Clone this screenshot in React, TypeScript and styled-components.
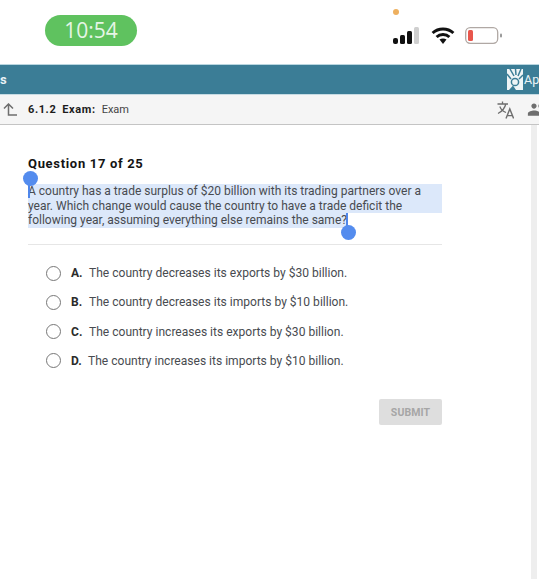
import React from "react";
import styled, { createGlobalStyle } from "styled-components";
import { MdPeople } from "react-icons/md";

const Global = createGlobalStyle`
  html, body { margin: 0; padding: 0; background: #fff; }
  body { font-family: Roboto, "Liberation Sans", sans-serif; }
`;

const Page = styled.div`
  width: 539px;
  height: 579px;
  overflow: hidden;
  display: flex;
  flex-direction: column;
  background: #fff;
`;

const StatusBar = styled.div`
  height: 65px;
  flex: none;
  display: flex;
  justify-content: space-between;
  padding: 15px 36px 0 45px;
  box-sizing: border-box;
`;

const TimePill = styled.div`
  width: 92px;
  height: 31px;
  border-radius: 16px;
  background: #5fc25f;
  color: #e6f5e6;
  font-family: "Open Sans", Roboto, sans-serif;
  font-size: 21px;
  line-height: 31px;
  text-align: center;
`;

const StatusRight = styled.div`
  display: flex;
  flex-direction: column;
  margin-top: -6px;
`;

const OrangeDot = styled.div`
  width: 6px;
  height: 6px;
  border-radius: 50%;
  background: #eeb05f;
`;

const StatusIcons = styled.div`
  margin-top: 12px;
  display: flex;
  align-items: flex-start;
  gap: 10px;
`;

const TealBar = styled.div`
  height: 29px;
  flex: none;
  background: #3b7d96;
  border-top: 1px solid #b9d6e0;
  border-bottom: 1px solid #c6dbe3;
  margin-top: -1px;
  display: flex;
  align-items: center;
  color: #eaf3f6;
  font-size: 13px;
  font-weight: 700;
  white-space: nowrap;
  overflow: hidden;
`;

const TealLeft = styled.span`
  flex: 0 0 507px;
`;

const TealBrand = styled.div`
  flex: none;
  display: flex;
  align-items: center;
  gap: 1px;
  font-size: 12.5px;
  font-weight: 400;
`;

const SubHeader = styled.div`
  height: 30px;
  flex: none;
  box-sizing: border-box;
  background: #f5f5f5;
  border-bottom: 1px solid #c4c4c4;
  display: flex;
  align-items: center;
  padding-left: 3px;
  white-space: nowrap;
  overflow: hidden;
`;

const Crumbs = styled.div`
  margin-left: 11px;
  flex: 0 0 469px;
  font-size: 11px;
  color: #444;
  display: flex;
  gap: 6px;
`;

const CrumbStrong = styled.b`
  font-weight: 700;
  color: #1c1c1c;
  letter-spacing: 0.6px;
`;

const SubIcons = styled.div`
  display: flex;
  align-items: center;
  flex: none;
  gap: 13px;
  color: #6e6e6e;
`;

const Main = styled.div`
  flex: 1;
  display: flex;
  min-height: 0;
`;

const Content = styled.div`
  width: 414px;
  margin-left: 28px;
  padding-top: 31px;
  display: flex;
  flex-direction: column;
`;

const Scrollbar = styled.div`
  width: 6px;
  margin-left: 89px;
  flex: none;
  background: #eeeeee;
`;

const Title = styled.div`
  font-size: 13px;
  font-weight: 700;
  line-height: 16px;
  color: #141414;
  letter-spacing: 0.68px;
`;

const Passage = styled.div`
  position: relative;
  margin-top: 12px;
  font-size: 12.03px;
  line-height: 14.5px;
  color: #484b50;
  padding-bottom: 16.5px;
  border-bottom: 1px solid #e6e6e6;
`;

const Line = styled.div<{ $w: number }>`
  width: ${(p) => p.$w}px;
  height: 14.5px;
  background: #dce8fa;
  white-space: nowrap;
`;

const Caret = styled.span<{ $l: number; $t: number; $h: number }>`
  position: absolute;
  left: ${(p) => p.$l}px;
  top: ${(p) => p.$t}px;
  width: 2px;
  height: ${(p) => p.$h}px;
  background: #4f86ea;
`;

const Knob = styled.span<{ $l: number; $t: number }>`
  position: absolute;
  left: ${(p) => p.$l}px;
  top: ${(p) => p.$t}px;
  width: 15px;
  height: 15px;
  border-radius: 50%;
  background: #548cee;
`;

const Options = styled.div`
  margin-top: 13.4px;
  padding-left: 18px;
  display: flex;
  flex-direction: column;
`;

const Option = styled.div`
  height: 29.3px;
  display: flex;
  align-items: center;
  font-size: 12.05px;
  color: #484b50;
  white-space: nowrap;
`;

const Radio = styled.span`
  width: 15px;
  height: 15px;
  box-sizing: border-box;
  border: 1.5px solid #777;
  border-radius: 50%;
  margin-right: 10px;
  flex: none;
`;

const Letter = styled.b<{ $w: number }>`
  width: ${(p) => p.$w}px;
  flex: none;
  font-weight: 700;
  color: #2b2b2b;
`;

const SubmitRow = styled.div`
  margin-top: 23.6px;
  display: flex;
  justify-content: flex-end;
`;

const Submit = styled.button`
  width: 63px;
  height: 26px;
  padding: 0;
  border: none;
  border-radius: 2px;
  background: #dedede;
  color: #a6a6a6;
  font-family: Roboto, sans-serif;
  font-size: 10.5px;
  font-weight: 700;
  letter-spacing: 0.1px;
`;

const options = [
  { l: "A.", w: 18, t: "The country decreases its exports by $30 billion." },
  { l: "B.", w: 18, t: "The country decreases its imports by $10 billion." },
  { l: "C.", w: 18, t: "The country increases its exports by $30 billion." },
  { l: "D.", w: 17, t: "The country increases its imports by $10 billion." },
];

export default function App() {
  return (
    <Page>
      <Global />
      <StatusBar>
        <TimePill>10:54</TimePill>
        <StatusRight>
          <OrangeDot />
          <StatusIcons>
            <svg width="27" height="17" viewBox="0 0 27 17" style={{ marginRight: 1 }}>
              <rect x="0" y="11" width="5" height="6" rx="2" fill="#111" />
              <rect x="7" y="8" width="5" height="9" rx="1.5" fill="#111" />
              <rect x="14" y="4" width="5" height="13" rx="1.5" fill="#111" />
              <rect x="21" y="0" width="5" height="17" rx="1.5" fill="#cfcfcf" />
            </svg>
            <svg width="24" height="17" viewBox="0 0 24 17">
              <path d="M1.6 6 C7.5 0.6 16.5 0.6 22.4 6" fill="none" stroke="#111" strokeWidth="3" />
              <path d="M5.6 10 C9 6.8 15 6.8 18.4 10" fill="none" stroke="#111" strokeWidth="3" />
              <path d="M8.5 12.6 C10.5 11 13.5 11 15.5 12.6 L12 17 Z" fill="#111" />
            </svg>
            <svg width="38" height="17" viewBox="0 0 38 17">
              <rect x="0.7" y="0.7" width="32" height="15.6" rx="4.5" fill="#fff" stroke="#b0a8a4" strokeWidth="1.3" />
              <rect x="3" y="3" width="5" height="11" rx="1.5" fill="#e8564c" />
              <rect x="35" y="6.5" width="2" height="4" rx="1" fill="#9a9a9a" />
            </svg>
          </StatusIcons>
        </StatusRight>
      </StatusBar>

      <TealBar>
        <TealLeft>s</TealLeft>
        <TealBrand>
          <svg width="16" height="21" viewBox="0 0 16 21">
            <rect width="16" height="21" fill="#eef4f6" />
            <path d="M3 0 L7 7 M8.5 0 L9 6 M14 0 L11 7 M0 5 L4 10 M16 6 L12 10" stroke="#3b7d96" strokeWidth="1.5" />
            <circle cx="8" cy="13" r="3.6" fill="none" stroke="#3b7d96" strokeWidth="1.5" />
            <path d="M2 21 L6 16.5 L9 21 Z" fill="#3b7d96" />
          </svg>
          Ap
        </TealBrand>
      </TealBar>

      <SubHeader>
        <svg width="14" height="14" viewBox="0 0 14 14" style={{ flex: "none" }}>
          <path d="M1 5.5 L5.5 1 L10 5.5 M5.5 1.5 V12 H14" fill="none" stroke="#6e6e6e" strokeWidth="1.5" />
        </svg>
        <Crumbs>
          <CrumbStrong>6.1.2</CrumbStrong>
          <CrumbStrong>Exam:</CrumbStrong>
          <span>Exam</span>
        </Crumbs>
        <SubIcons>
          <svg width="17" height="18" viewBox="0 0 17 18" fill="none" stroke="#6e6e6e" strokeWidth="1.3">
            <path d="M0.5 3 H11 M5.5 0.5 V3 M8.8 3 C7.8 7.5 4.8 10.5 1 12.5 M2.8 5.5 C4 8.5 6.3 10.5 9 11.5" />
            <path d="M9 17.5 L12.8 8 L16.6 17.5 M10.2 14.6 H15.4" strokeWidth="1.4" />
          </svg>
          <MdPeople size={21} />
        </SubIcons>
      </SubHeader>

      <Main>
        <Content>
          <Title>Question 17 of 25</Title>
          <Passage>
            <Line $w={414}>A country has a trade surplus of $20 billion with its trading partners over a</Line>
            <Line $w={414}>year. Which change would cause the country to have a trade deficit the</Line>
            <Line $w={320}>following year, assuming everything else remains the same?</Line>
            <Caret $l={0} $t={0} $h={14} />
            <Knob $l={-5} $t={-13} />
            <Caret $l={318} $t={29} $h={15} />
            <Knob $l={313} $t={41} />
          </Passage>
          <Options>
            {options.map((o) => (
              <Option key={o.l}>
                <Radio />
                <Letter $w={o.w}>{o.l}</Letter>
                {o.t}
              </Option>
            ))}
          </Options>
          <SubmitRow>
            <Submit>SUBMIT</Submit>
          </SubmitRow>
        </Content>
        <Scrollbar />
      </Main>
    </Page>
  );
}
